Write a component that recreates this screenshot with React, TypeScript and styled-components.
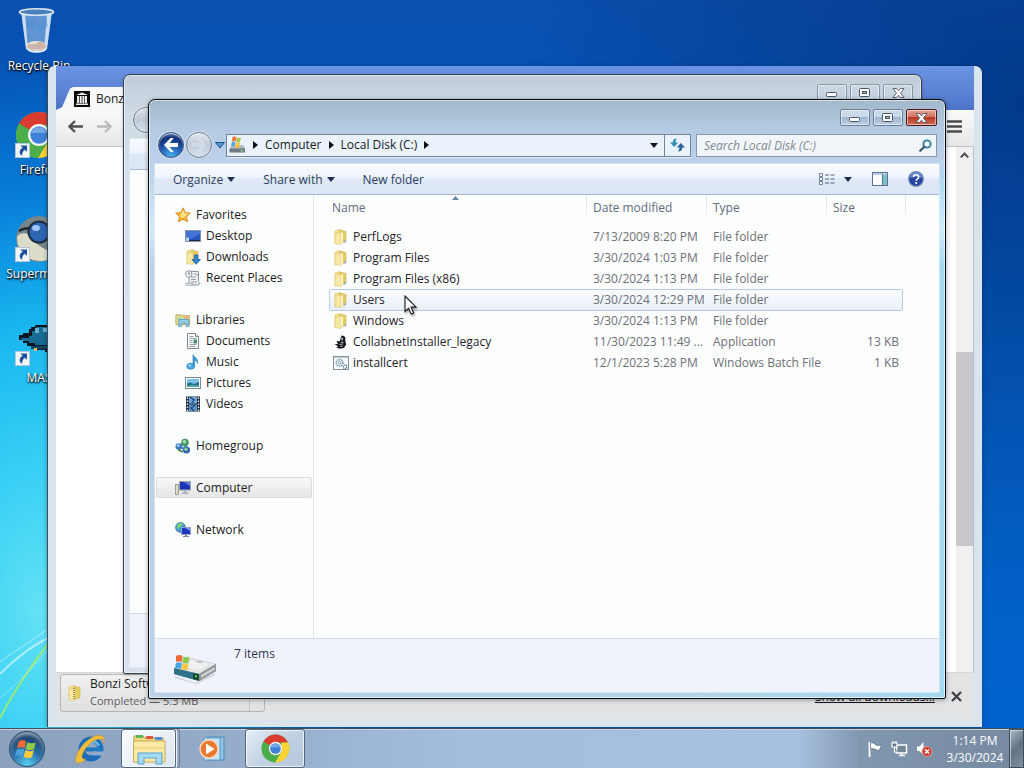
import React from "react";
import styled, { createGlobalStyle, css } from "styled-components";

const GlobalStyle = createGlobalStyle`
  *, *::before, *::after { box-sizing: border-box; }
  body { margin: 0; overflow: hidden; }
  body, button, input, table { font-family: "Open Sans", "Noto Sans", sans-serif; font-size: 12px; }
  button { border: 0; padding: 0; background: none; color: inherit; }
  svg { display: block; flex: none; }
  ul { list-style: none; margin: 0; padding: 0; }
`;

/* ---------- icons ---------- */

const Star = () => (
  <svg width="16" height="16" viewBox="0 0 16 16">
    <path d="M8 .8l2.1 4.7 5.2.6-3.8 3.5 1 5.2L8 12.2l-4.5 2.6 1-5.2L.7 6.1l5.2-.6z" fill="#fbb936" stroke="#cf8420" strokeWidth=".9" strokeLinejoin="round" />
    <path d="M8 2.800l1.300 3.400 3.600.5-2.700 2.200L8 11 5.500 9.500z" fill="#ffe88c" />
  </svg>
);
const DesktopIcon = () => (
  <svg width="16" height="16" viewBox="0 0 16 16">
    <rect x=".5" y="2.500" width="15" height="11" fill="#2554bd" stroke="#8594a8" />
    <path d="M1 3h14v3L6 11H1z" fill="#4173d6" />
    <path d="M1 12h14v1H1z" fill="#1b2c50" />
    <path d="M1 9.500h3V13H1z" fill="#b8d0ee" />
  </svg>
);
const FolderShape = () => (
  <>
    <path d="M2 2l5-1.500v12L2 15z" fill="#f3e08c" stroke="#d9c06a" strokeWidth=".6" />
    <path d="M7 1l6 1.500v10L7 14.500z" fill="#e6ca62" stroke="#d0b255" strokeWidth=".6" />
    <path d="M2 4.500l6-1.300v12.300L2 14.500z" fill="#f7e9a4" stroke="#dcc572" strokeWidth=".6" />
  </>
);
const Folder = () => (
  <svg width="16" height="16" viewBox="0 0 16 16">
    <FolderShape />
    <path d="M8 3.500h2v9l-2 2.800z" fill="#fbf3c4" />
    <path d="M11.600 10.500l1.300.7v2l-1.800.2z" fill="#88b2cc" />
  </svg>
);
const DownloadsIcon = () => (
  <svg width="16" height="16" viewBox="0 0 16 16">
    <FolderShape />
    <path d="M9.500 6h3.400v4.500H15.500L11.200 15.300 7 10.500h2.500z" fill="#3188d4" stroke="#19599d" strokeWidth=".8" />
  </svg>
);
const RecentIcon = () => (
  <svg width="16" height="16" viewBox="0 0 16 16">
    <path d="M4 1.500h9.500v10L15 13.500 13 15H5.500L4 13.500z" fill="#edf0f2" stroke="#8b949c" />
    <path d="M6 7h5M6 9.500h5M6 12h6M9 4h3v2" stroke="#97a1aa" fill="none" />
    <circle cx="3.800" cy="4" r="3.200" fill="#f7f9fa" stroke="#8b949c" />
    <path d="M3.800 2v2.200h1.700" stroke="#7b858e" fill="none" />
    <path d="M.8 13.200h7v2h-7z" fill="#dfe4e8" stroke="#9aa3ab" strokeWidth=".7" />
  </svg>
);
const LibrariesIcon = () => (
  <svg width="16" height="16" viewBox="0 0 17 16">
    <path d="M1 2.500h5l1 1h8.500V13H1z" fill="#f0df8e" stroke="#b9a455" />
    <path d="M2.500 4.500h6v3h-6z" fill="#b7dca0" />
    <path d="M9.500 4.500h5v2h-5z" fill="#e9a28c" />
    <path d="M4 7.500h10.500V15H12v-3.500H6.500V15H4z" fill="#93cfea" stroke="#4e9ac2" strokeWidth=".9" />
  </svg>
);
const DocIcon = () => (
  <svg width="16" height="16" viewBox="0 0 16 16">
    <path d="M2.500.5h8l3 3v12h-11z" fill="#fcfdfd" stroke="#7f868b" />
    <path d="M10.500.5v3h3" fill="#e4e8ea" stroke="#7f868b" />
    <path d="M4.500 3.500h4M4.500 5.500h7M4.500 7.500h3M4.500 9.500h3M4.500 11.500h7M4.500 13.500h6" stroke="#8d959b" strokeWidth=".9" />
    <path d="M8.500 6.500h3.500v4H8.500z" fill="#4c8a76" />
  </svg>
);
const MusicIcon = () => (
  <svg width="16" height="16" viewBox="0 0 16 16">
    <path d="M8 .6c.8 3 5.600 3.600 4.600 8.900-.4-2.200-1.800-3-3-3.200v6h-1.600z" fill="#3e9fdd" stroke="#1d74b6" strokeWidth=".6" />
    <ellipse cx="5.700" cy="12.200" rx="4" ry="3" fill="#46a9e4" stroke="#1d74b6" strokeWidth=".6" />
    <ellipse cx="4.700" cy="11.400" rx="1.700" ry="1" fill="#a6dbf8" />
  </svg>
);
const PictureIcon = () => (
  <svg width="16" height="16" viewBox="0 0 16 16">
    <rect x=".5" y="2.500" width="15" height="11" fill="#fff" stroke="#7d8b98" />
    <rect x="2" y="4" width="12" height="8" fill="#79bfe6" />
    <path d="M2 8.500l3-1 4 1.500 5-2V12H2z" fill="#256a80" />
    <path d="M2 10.500l6-.7 6 .7V12H2z" fill="#49a6a0" />
  </svg>
);
const VideoIcon = () => (
  <svg width="16" height="16" viewBox="0 0 16 16">
    <rect x="1" y=".5" width="14" height="15" fill="#212c38" />
    <rect x="4" y="1" width="8" height="6.500" fill="#6fa5d9" />
    <rect x="4" y="8.500" width="8" height="6.500" fill="#5d94cc" />
    <path d="M5 1l4 3-2 3M10 9l-4 3 3 3" stroke="#1e4878" strokeWidth="1.300" fill="none" />
    <path d="M2.500 1.500v14M13.500 1.500v14" stroke="#e6edf3" strokeWidth="1.400" strokeDasharray="1.500 1.500" />
  </svg>
);
const HomegroupIcon = () => (
  <svg width="16" height="16" viewBox="0 0 16 16">
    <path d="M4 8l6-3 1 7z" fill="none" stroke="#4a8fb8" strokeWidth="2.500" />
    <circle cx="3.800" cy="8.500" r="3.300" fill="#3b78c4" />
    <circle cx="10" cy="4.500" r="3.800" fill="#3f9a62" />
    <circle cx="11.500" cy="12" r="3.500" fill="#2f62b4" />
    <circle cx="9.400" cy="3.800" r="1.800" fill="#a6ddb0" />
    <circle cx="3.200" cy="7.500" r="1.500" fill="#a6cdf2" />
    <circle cx="11" cy="11.200" r="1.700" fill="#8fd093" />
    <path d="M3 11.500l5 2.500" stroke="#357f45" strokeWidth="1.800" />
  </svg>
);
const ComputerIcon = () => (
  <svg width="16" height="16" viewBox="0 0 16 16">
    <rect x=".5" y="4.500" width="3" height="10" fill="#d8dccb" stroke="#8c917e" strokeWidth=".8" />
    <rect x="4.500" y="1.500" width="11" height="8.500" fill="#1c33b8" stroke="#a1a798" />
    <path d="M9 2h6v4z" fill="#5a82ea" />
    <path d="M8.500 10.500h3v2h2V14h-7v-1.500h2z" fill="#aab2c4" />
  </svg>
);
const NetworkIcon = () => (
  <svg width="16" height="16" viewBox="0 0 16 16">
    <circle cx="5.500" cy="5.500" r="5" fill="#3f97d6" stroke="#2b6ca4" strokeWidth=".6" />
    <path d="M2 3c2-2.500 5-2.500 6-.500C7 5 4.500 4 4 7.500 2.500 7 1 5.500 2 3z" fill="#7ccf7e" />
    <rect x="6.500" y="5.500" width="9" height="7" fill="#1d36c0" stroke="#93a5c2" />
    <path d="M10 6h5v3z" fill="#6c93ef" />
    <path d="M10 13h2v1h2v1H8v-1h2z" fill="#7587a6" />
  </svg>
);
const InstallerIcon = () => (
  <svg width="16" height="16" viewBox="0 0 16 16">
    <path d="M8.500 1.500l2.500.5 1.500 1.800-.3 2.700 1 4-2.200 3.500-4.500.7-3.300-1.500 1.800-.9-3.500-2 3.500-.3L3.500 7l3.200.3z" fill="#17191d" />
    <path d="M8.500 3.300l2 .8-.8 2.400-2.200-.7z" fill="#8d97a3" />
    <path d="M8 8l2.500.4M6.500 10.500l3.500-.6M7.500 12.500l2-.3" stroke="#cfd5da" strokeWidth=".9" />
  </svg>
);
const BatchIcon = () => (
  <svg width="16" height="16" viewBox="0 0 16 16">
    <rect x=".5" y="1.500" width="15" height="13" fill="#fafcfd" stroke="#81909b" />
    <path d="M1 2h14v1.300H1z" fill="#c6d3dc" />
    <circle cx="6.500" cy="7.800" r="3.300" fill="none" stroke="#7f9fb3" strokeWidth="1.600" strokeDasharray="1.500 .6" />
    <circle cx="6.500" cy="7.800" r="1.400" fill="none" stroke="#6d93ab" strokeWidth=".8" />
    <circle cx="12" cy="11.800" r="1.800" fill="none" stroke="#53768c" strokeWidth="1.300" strokeDasharray="1.200 .5" />
  </svg>
);
const Flag4 = ({ size = 16 }: { size?: number }) => (
  <svg width={size} height={size} viewBox="0 0 20 20">
    <path d="M3 4c2.500-1.800 4.500-1.300 6.300-.2L8 9.400C6 8.300 4 8.200 1.700 9.600z" fill="#ee6b35" />
    <path d="M10.300 4.300c2.500 1.300 4.700 1.300 7 0L15.900 10c-2.200 1.200-4.500 1.200-7-.1z" fill="#8fcb49" />
    <path d="M1.400 10.700c2.300-1.300 4.300-1.200 6.300-.2l-1.400 5.600c-2-1.200-4-1.200-6.300.2z" fill="#4aa1df" />
    <path d="M8.700 10.900c2.500 1.300 4.700 1.300 7 0l-1.500 5.700c-2.200 1.200-4.500 1.200-7-.1z" fill="#fbcb3d" />
  </svg>
);
const SmallDrive = () => (
  <svg width="18" height="18" viewBox="0 0 18 18">
    <path d="M2 12l2-3h11l2 3v1H2z" fill="#b3bbc2" />
    <path d="M1.500 12.500h15.500v4H1.500z" fill="#6f7982" />
    <path d="M12.500 14h3v1.300h-3z" fill="#7fe07f" />
    <path d="M4 5.500l3.500.5-1 4.500L3 10z" fill="#58a6dd" />
    <path d="M4.500 1c1.500-.8 3-.5 4 .2L7.800 5.500c-1.300-.7-2.600-.7-3.800 0z" fill="#ee7238" />
    <path d="M9 1.500c1.300.6 2.600.6 4 0l-1 4.800c-1.200.5-2.500.4-3.700-.2z" fill="#a4c94c" />
    <path d="M8 6.500c1.300.6 2.500.7 3.800.2l-1 5c-1.300.3-2.500.2-3.800-.4z" fill="#f4c436" />
  </svg>
);
const BigDrive = () => (
  <svg width="44" height="32" viewBox="0 0 44 32">
    <path d="M2 24l20 7 20-10v2L23 32 2 26z" fill="#aab0b8" opacity=".5" />
    <path d="M1 16L18 6l25 6v7L26 29 1 22z" fill="#8a9193" />
    <path d="M1 16L18 6l25 6-17 10z" fill="#e2e5e5" />
    <path d="M18 8l18 4.200-10 6-17-4z" fill="#eff0f0" />
    <path d="M22 9.500l4-1 5 1.200-4 1.500z" fill="#bcc1c3" />
    <path d="M1 16l25 6v7L1 22z" fill="#2d718a" />
    <path d="M20 21l6 1.200v6.300l-6-1.500z" fill="#174a33" />
    <path d="M22 23l2 .5v2l-2-.5z" fill="#4fe05f" />
    <path d="M26 22l17-10v7L26 29z" fill="#8f9597" />
    <path d="M28 23l14-8v2.500L28 26z" fill="#cdd2d2" />
    <path d="M3 4c2.500-1.500 4.500-1.200 6.500 0L9 10c-2-1-4-1-6 0z" fill="#ec6a37" />
    <path d="M10.500 4.600c2 1 4 1 6 0L15.500 11c-2 .8-4 .8-6-.2z" fill="#8bc64d" />
    <path d="M2.800 11c2-1 4-1 6 0L8 17c-2-1-4-1-6 .2z" fill="#4ba4e2" />
    <path d="M9.500 11.500c2 1 4 1 6 0l-1 6c-2 .8-4 .8-6-.2z" fill="#f7c83c" />
  </svg>
);

const Triangle = ({ color = "#1e2f52" }: { color?: string }) => (
  <svg width="8" height="5" viewBox="0 0 8 5">
    <path d="M0 0h8L4 5z" fill={color} />
  </svg>
);
const Chevron = () => (
  <svg width="5" height="8" viewBox="0 0 5 8">
    <path d="M0 0v8l5-4z" fill="#0c0f14" />
  </svg>
);
const ChromeLogo = ({ size }: { size: number }) => (
  <svg width={size} height={size} viewBox="0 0 48 48">
    <circle cx="24" cy="24" r="23" fill="#4cae4a" />
    <path d="M24 24L4.100 12.500A23 23 0 0 1 43.900 12.500L44 14H24z" fill="#dc3b30" />
    <path d="M43.900 12.500A23 23 0 0 1 23 47L33.500 29 34 14h10z" fill="#fbd334" />
    <path d="M4.100 12.500L14.700 29.500 24 34l9.500-4.500L23 47A23 23 0 0 1 4.100 12.500z" fill="#4cae4a" />
    <circle cx="24" cy="24" r="11" fill="#f4f6f7" />
    <circle cx="24" cy="24" r="8.700" fill="#3f80d8" />
    <path d="M16 22a8.500 8.500 0 0 1 16 0z" fill="#76a8e8" />
  </svg>
);
const ShortcutArrow = () => (
  <svg width="15" height="15" viewBox="0 0 15 15">
    <rect x=".5" y=".5" width="14" height="14" fill="#f3f7fc" stroke="#b5c5da" />
    <path d="M5.500 2.500H12v6.300L9.800 6.700C7.600 8.400 7 10 7.300 12.800 4 11 3.400 7.300 7.700 4.700z" fill="#1c4f9f" />
  </svg>
);
const RecycleBin = () => (
  <svg width="48" height="48" viewBox="0 0 48 48">
    <path d="M6 4l5 38c3 4.500 17 4.500 21 0l5-38z" fill="#a9cdf0" opacity=".55" />
    <path d="M6 4l5 38 2 1.500L10 6z" fill="#eef6fd" opacity=".75" />
    <path d="M37 4l-5 38-3 2 3-37z" fill="#e4f0fb" opacity=".8" />
    <path d="M12 12l6-2 4 6-5 6-6-3zM22 20l9-9 2 8-7 5z" fill="#4d8fd6" opacity=".5" />
    <ellipse cx="21.500" cy="39" rx="10.500" ry="5" fill="#eadfd6" />
    <path d="M12 39c3-4 7 0 10-3s7 0 9 2l-1 3c-4 2-13 2-17 0z" fill="#c3a898" opacity=".75" />
    <path d="M13 42c4 3 13 3 17.500 0v1.500c-4 3-14 3-17.500 0z" fill="#f6f9fc" />
    <ellipse cx="21.500" cy="5" rx="17" ry="3.200" fill="#4a80bd" stroke="#d9e6f2" strokeWidth="1.600" />
  </svg>
);
const SupermiumLogo = () => (
  <svg width="48" height="48" viewBox="0 0 48 48">
    <circle cx="24" cy="24" r="23" fill="#77868a" />
    <path d="M2 22c4-7 15-3 18 4 4 8 18 9 18 16A23 23 0 0 1 2 22z" fill="#dcdccb" />
    <path d="M4 16c6-4 12-3 18-3h22" stroke="#1d2a35" strokeWidth="2.500" fill="none" />
    <circle cx="24" cy="17" r="11.500" fill="#1d2a3c" />
    <circle cx="24" cy="17" r="9.500" fill="#2d65b4" />
    <ellipse cx="21" cy="13" rx="4" ry="3" fill="#9cc7f2" />
  </svg>
);
const SaucerIcon = () => (
  <svg width="48" height="48" viewBox="0 0 48 48" shapeRendering="crispEdges">
    <path d="M14 10h2V8h4V6h22v5h6v24h-8v-2H30v-2h-8v-2h-6v-2h-4v-3H8v-3H4v-5h4v-2h6z" fill="#0a1824" />
    <path d="M6 19h8v-2h3v-5h4V8h18v9h9v9H20v-2h-6v-2H8z" fill="#176a92" />
    <path d="M20 9h4v5h-4zM28 9h8v4h-8z" fill="#64b3d4" />
    <path d="M16 27h26v3H16z" fill="#0f4560" />
    <path d="M19 29h3v3h-3z" fill="#e8bd62" />
  </svg>
);

/* ---------- desktop ---------- */

const Screen = styled.div`
  display: flex;
  flex-direction: column;
  height: 100vh;
  overflow: hidden;
`;
const Desktop = styled.main`
  position: relative;
  flex: 1;
  min-height: 0;
  overflow: hidden;
  background:
    radial-gradient(ellipse 320px 560px at 4% 84%, #63e2f4 0%, #3ad0f5 25%, #1ab8f0 50%, rgba(8, 140, 228, 0.7) 75%, rgba(4, 104, 204, 0) 100%),
    radial-gradient(ellipse 500px 500px at 100% 15%, rgba(0, 40, 110, 0.6), rgba(0, 50, 130, 0)),
    linear-gradient(180deg, #0a50ae 0%, #0552b4 12%, #0460c4 50%, #0062cc 100%);
`;
const Streaks = styled.svg`
  position: absolute;
  left: 0;
  bottom: 0;
`;
const IconColumn = styled.ul`
  position: absolute;
  top: 7px;
  left: 0;
  width: 78px;
`;
const Shortcut = styled.li`
  position: relative;
  display: flex;
  flex-direction: column;
  align-items: center;
  gap: 3px;
  height: 104px;
  color: #fff;
  line-height: 16px;
  white-space: nowrap;
  text-shadow: 0 1px 2px #000, 1px 1px 2px #000;
`;
const Overlay = styled.span`
  position: absolute;
  left: 15px;
  top: 32px;
`;

/* ---------- windows ---------- */

const WindowFrame = styled.section<{ $active?: boolean }>`
  position: absolute;
  inset: ${(p) => (p.$active ? "99px 78px 29px 148px" : "74px 102px 54px 123px")};
  display: flex;
  flex-direction: column;
  padding: 0 6px 6px;
  border: 1px solid ${(p) => (p.$active ? "#05090e" : "#34434f")};
  border-radius: 7px 7px 2px 2px;
  ${(p) =>
    p.$active
      ? css`
          background:
            linear-gradient(180deg, rgba(0, 0, 0, 0) 70px, rgba(226, 242, 252, 0.7) 130px, rgba(0, 0, 0, 0) 165px),
            linear-gradient(180deg, #a2b8ca 0, #b4cae2 28px, #bdd1ec 64px, rgba(189, 209, 236, 0) 90px),
            linear-gradient(90deg, #b9d2e5, #b3d5e8 70%, #a5d9f0);
          box-shadow: inset 0 0 0 1px rgba(255, 255, 255, 0.6), 0 1px 5px rgba(0, 0, 0, 0.35);
        `
      : css`
          background: linear-gradient(180deg, #c0cdd9 0, #cfdae3 40px, #d8e1e9 120px, #dbe1eb 100%);
          box-shadow: inset 0 0 0 1px rgba(255, 255, 255, 0.5), 0 1px 3px rgba(0, 0, 0, 0.25);
        `}
`;
const TitleBar = styled.header`
  display: flex;
  justify-content: flex-end;
  align-items: flex-start;
  gap: 3px;
  height: 28px;
  padding: 9px 2px 0 0;
`;
const CaptionButton = styled.button<{ $kind: "plain" | "idle" | "close" }>`
  display: grid;
  place-items: center;
  width: ${(p) => (p.$kind === "close" ? "31px" : "30px")};
  height: 17px;
  border: 1px solid #6c7e94;
  border-radius: 2px;
  box-shadow: inset 0 0 0 1px rgba(255, 255, 255, 0.5);
  background: linear-gradient(#cbdaea 0 46%, #a0b6cf 50%, #bcd1e7);
  ${(p) =>
    p.$kind === "close" &&
    css`
      border-color: #4c1b1c;
      background: linear-gradient(#e6a393 0, #d27563 46%, #b93722 50%, #d1705a);
    `}
  ${(p) =>
    p.$kind === "idle" &&
    css`
      border-color: #8896a4;
      background: linear-gradient(#ccd7e1, #c6d2de);
    `}
`;
const CaptionButtons = ({ active }: { active?: boolean }) => (
  <>
    <CaptionButton $kind={active ? "plain" : "idle"} aria-label="Minimize">
      <svg width="12" height="9" viewBox="0 0 12 9">
        <rect x=".5" y="4.500" width="10" height="4" rx="1" fill="#fff" stroke="#4a5666" />
      </svg>
    </CaptionButton>
    <CaptionButton $kind={active ? "plain" : "idle"} aria-label="Maximize">
      <svg width="12" height="9" viewBox="0 0 12 9">
        <rect x=".5" y=".5" width="10" height="8" rx="1" fill="#fff" stroke="#4a5666" />
        <rect x="3.500" y="3.500" width="4" height="2" fill="#a9bacd" stroke="#4a5666" />
      </svg>
    </CaptionButton>
    <CaptionButton $kind={active ? "close" : "idle"} aria-label="Close">
      <svg width="13" height="10" viewBox="0 0 13 10">
        <path d="M1 .5h3.400l2.100 2.300L8.600.5H12L8.500 5l3.500 4.500H8.600L6.500 7.200 4.400 9.500H1L4.500 5z" fill="#fff" stroke="#4a5360" strokeWidth=".9" />
      </svg>
    </CaptionButton>
  </>
);

const NavBar = styled.div`
  display: flex;
  align-items: center;
  height: 36px;
  padding: 0 2px 2px 3px;
`;
const RoundButton = styled.button<{ $lit?: boolean }>`
  display: grid;
  place-items: center;
  flex: none;
  width: 26px;
  height: 26px;
  margin-right: 2px;
  border-radius: 50%;
  border: 1px solid ${(p) => (p.$lit ? "#3a5580" : "#74818f")};
  background: ${(p) =>
    p.$lit
      ? "radial-gradient(circle at 50% 100%, #49b8f2 0, #1d4fa8 50%, #123275 72%, #8ba8d6 100%)"
      : "linear-gradient(#dde4ec, #c0cbd8 50%, #d8e3ec)"};
  box-shadow: inset 0 1px 1px rgba(255, 255, 255, 0.8), 0 0 1px 1px rgba(255, 255, 255, 0.35);
`;
const HistoryButton = styled.button`
  width: 12px;
  display: grid;
  place-items: center;
`;
const AddressBar = styled.div`
  display: flex;
  align-items: center;
  flex: 1;
  min-width: 0;
  height: 23px;
  margin: 0 5px 0 0;
  border: 1px solid #6f8499;
  background: #eaf2fb;
  box-shadow: 0 1px 0 rgba(255, 255, 255, 0.6);
`;
const Crumbs = styled.nav`
  display: flex;
  align-items: center;
  gap: 7px;
  flex: 1;
  padding-left: 1px;
  line-height: 16px;
  a {
    color: #15191f;
    text-decoration: none;
    white-space: nowrap;
  }
`;
const AddressTool = styled.button<{ $divided?: boolean }>`
  display: grid;
  place-items: center;
  height: 21px;
  width: ${(p) => (p.$divided ? "26px" : "20px")};
  border-left: ${(p) => (p.$divided ? "1px solid #6f8499" : "0")};
`;
const SearchBox = styled.label`
  display: flex;
  align-items: center;
  width: 241px;
  height: 23px;
  padding: 0 4px 0 7px;
  border: 1px solid #8798ab;
  background: #f1f6fb;
  input {
    flex: 1;
    min-width: 0;
    padding: 0;
    border: 0;
    outline: 0;
    background: transparent;
    font-style: italic;
  }
  input::placeholder {
    color: #82888f;
  }
`;
const Body = styled.div`
  display: flex;
  flex-direction: column;
  flex: 1;
  min-height: 0;
  background: #fdfefe;
  box-shadow: 0 0 0 1px rgba(230, 243, 252, 0.5);
`;
const Toolbar = styled.div`
  display: flex;
  align-items: center;
  flex: none;
  height: 31px;
  padding: 0 15px 0 18px;
  border-bottom: 1px solid #a9b6cb;
  background: linear-gradient(#fafcff 0, #eef4fd 45%, #dfe9f7 50%, #dbe6f5 100%);
  color: #2b3d5e;
`;
const ToolButton = styled.button`
  display: flex;
  align-items: center;
  gap: 4px;
  height: 24px;
  margin-right: 28px;
  white-space: nowrap;
`;
const ToolIcons = styled.div`
  display: flex;
  align-items: center;
  margin-left: auto;
  gap: 20px;
`;
const ViewButton = styled.button`
  display: flex;
  align-items: center;
  gap: 9px;
`;
const Panes = styled.div`
  display: flex;
  flex: 1;
  min-height: 0;
`;
const SideBar = styled.nav`
  flex: none;
  width: 159px;
  padding: 9px 1px 0;
  border-right: 1px solid #e2e6ef;
`;
const SideGroup = styled.ul`
  margin-bottom: 21px;
`;
const SideItem = styled.li<{ $child?: boolean; $current?: boolean }>`
  display: flex;
  align-items: center;
  gap: 5px;
  height: 21px;
  padding-left: ${(p) => (p.$child ? "28px" : "18px")};
  border: 1px solid ${(p) => (p.$current ? "#dcdcde" : "transparent")};
  border-radius: 2px;
  background: ${(p) => (p.$current ? "linear-gradient(#f8f8f8, #e6e6e7)" : "none")};
  a {
    color: #1b1b22;
    text-decoration: none;
    white-space: nowrap;
  }
`;
const FilesPane = styled.div`
  flex: 1;
  min-width: 0;
  padding-left: 15px;
`;
const FileTable = styled.table`
  width: 577px;
  table-layout: fixed;
  border-collapse: collapse;
  isolation: isolate;
  color: #6d7076;
`;
const HeadCell = styled.th<{ $width: number; $first?: boolean }>`
  position: relative;
  width: ${(p) => p.$width}px;
  height: 31px;
  padding: ${(p) => (p.$first ? "0 0 6px 3px" : "0 0 6px 6px")};
  text-align: left;
  font-weight: 400;
  color: #5f6b7e;
  &::after {
    content: "";
    position: absolute;
    right: 0;
    top: 0;
    width: 1px;
    height: 19px;
    background: linear-gradient(#dde4ee, #e6ebf2);
  }
`;
const SortMark = styled.svg`
  position: absolute;
  left: 123px;
  top: 1px;
`;
const Row = styled.tr<{ $hot?: boolean }>`
  position: relative;
  height: 21px;
  ${(p) =>
    p.$hot &&
    css`
      &::after {
        content: "";
        position: absolute;
        z-index: -1;
        inset: 0 3px -1px 0;
        border: 1px solid #b6cbe6;
        border-radius: 2px;
        background: linear-gradient(#fafcfe, #e9f0fa);
      }
    `}
`;
const Cell = styled.td<{ $right?: boolean }>`
  padding: 0 7px 0 6px;
  text-align: ${(p) => (p.$right ? "right" : "left")};
  line-height: 16px;
  white-space: nowrap;
`;
const NameCell = styled(Cell)`
  padding: 0 4px;
  color: #24222a;
`;
const NameWrap = styled.span`
  display: flex;
  align-items: center;
  gap: 4px;
`;
const DetailsPane = styled.footer`
  display: flex;
  align-items: flex-start;
  flex: none;
  gap: 17px;
  height: 54px;
  padding: 6px 0 0 18px;
  border-top: 1px solid #d5dbe6;
  background: #f0f3fc;
  color: #2f3450;
`;
const DriveWrap = styled.span`
  padding-top: 7px;
`;

/* ---------- browser window ---------- */

const BrowserFrame = styled.section`
  position: absolute;
  inset: 66px 42px 1px 47px;
  display: flex;
  flex-direction: column;
  padding: 0 8px 8px;
  border: solid #3b4c5d;
  border-width: 0 0 0 1px;
  border-radius: 7px 7px 0 0;
  background: #dae4ec;
  box-shadow: 0 1px 4px rgba(0, 0, 0, 0.35);
`;
const TabStrip = styled.div`
  display: flex;
  align-items: flex-end;
  flex: none;
  height: 44px;
  background: linear-gradient(#6a93e3, #5b82d4 60%, #4c73c8);
`;
const Tab = styled.button`
  display: flex;
  align-items: center;
  gap: 6px;
  width: 180px;
  height: 23px;
  padding-left: 18px;
  background: #f7f8f9;
  clip-path: polygon(0 100%, 6px 88%, 14px 8%, 17px 0, 170px 0, 180px 100%);
  color: #222;
`;
const BrowserBar = styled.div`
  display: flex;
  align-items: center;
  flex: none;
  gap: 14px;
  height: 37px;
  padding: 0 12px 4px;
  border-bottom: 1px solid #c3c5c8;
  background: linear-gradient(#f8f9f9, #e7e8e9);
`;
const MenuButton = styled.button`
  margin-left: auto;
`;
const PageArea = styled.div`
  display: flex;
  justify-content: flex-end;
  flex: 1;
  min-height: 0;
  border-right: 1px solid #b9c2ca;
  background: #fff;
`;
const ScrollTrack = styled.div`
  display: flex;
  flex-direction: column;
  align-items: center;
  justify-content: space-between;
  width: 17px;
  padding: 5px 0 126px;
  background: #f0f0f3;
`;
const ScrollThumb = styled.div`
  width: 17px;
  height: 194px;
  background: #c7c8cb;
`;
const DownloadShelf = styled.footer`
  display: flex;
  align-items: center;
  flex: none;
  height: 47px;
  padding: 0 12px 0 4px;
  background: #e2e3e4;
  border-top: 1px solid #d4d6d8;
`;
const DownloadItem = styled.div`
  display: flex;
  align-items: center;
  width: 205px;
  height: 38px;
  margin-bottom: 7px;
  padding-left: 6px;
  border: 1px solid #b4b6b9;
  border-radius: 3px;
  background: linear-gradient(#f0f0f0, #e0e0e1);
  color: #1a1a1a;
  line-height: 17px;
`;
const DownloadText = styled.div`
  flex: 1;
  padding: 0 0 2px 7px;
  small {
    display: block;
    font-size: 11px;
    color: #5c5c5c;
  }
`;
const DownloadMenu = styled.button`
  align-self: stretch;
  width: 15px;
  border-left: 1px solid #c2c3c5;
`;
const ShelfLink = styled.a`
  margin: 0 16px 0 auto;
  color: #16181d;
`;

/* ---------- taskbar ---------- */

const Taskbar = styled.footer`
  display: flex;
  align-items: center;
  flex: none;
  height: 40px;
  border-top: 1px solid #42505f;
  box-shadow: inset 0 1px 0 #c3d1e0;
  background: linear-gradient(90deg, #8ba1bd 0, #93abc9 20%, #a3bddc 45%, #a6c0df 78%, #8197b0 84%, #75899f 100%);
`;
const StartButton = styled.button`
  display: grid;
  place-items: center;
  width: 36px;
  height: 36px;
  margin: 0 22px 0 9px;
  border-radius: 50%;
  border: 1px solid #2c4c6d;
  background: radial-gradient(circle at 50% 95%, #57d0f0 0, #2a73ab 40%, #1a3d69 75%, #5e7f9f 100%);
  box-shadow: inset 0 3px 4px rgba(255, 255, 255, 0.45);
`;
const TaskButton = styled.button<{ $open?: boolean; $stacked?: boolean }>`
  position: relative;
  display: grid;
  place-items: center;
  width: ${(p) => (p.$open ? (p.$stacked ? "55px" : "60px") : "46px")};
  height: 39px;
  margin: ${(p) => (p.$open ? (p.$stacked ? "0 13px 0 8px" : "0 0 0 10px") : "0")};
  ${(p) =>
    p.$open &&
    css`
      border: 1px solid #55677c;
      border-radius: 3px;
      background: linear-gradient(135deg, #e6edf5, #c2d1e3 50%, #b6c8dd);
      box-shadow: inset 0 0 0 1px rgba(255, 255, 255, 0.75);
    `}
  ${(p) =>
    p.$stacked &&
    css`
      background: linear-gradient(135deg, #f8fbfd, #dbe5f0);
      &::after {
        content: "";
        position: absolute;
        top: -1px;
        bottom: -1px;
        right: -5px;
        width: 4px;
        border: 1px solid #6b7d93;
        border-left-color: #eef4fa;
        border-radius: 0 3px 3px 0;
      }
    `}
`;
const Tray = styled.div`
  display: flex;
  align-items: center;
  gap: 8px;
  margin-left: auto;
`;
const Clock = styled.time`
  width: 68px;
  color: #fff;
  text-align: center;
  line-height: 17px;
`;
const ShowDesktop = styled.button`
  width: 15px;
  height: 39px;
  margin-left: -8px;
  border: 1px solid #3e4c5b;
  box-shadow: inset 1px 1px 0 rgba(255, 255, 255, 0.5);
  background: linear-gradient(135deg, #a9b7c5, #607284 50%, #8092a5);
`;
const Pointer = styled.svg`
  position: absolute;
  left: 404px;
  top: 295px;
  filter: drop-shadow(1px 2px 1px rgba(0, 0, 0, 0.35));
`;

/* ---------- data ---------- */

type Link = { name: string; icon: React.ReactNode };
const sideGroups: (Link & { children: Link[]; current?: boolean })[] = [
  {
    name: "Favorites",
    icon: <Star />,
    children: [
      { name: "Desktop", icon: <DesktopIcon /> },
      { name: "Downloads", icon: <DownloadsIcon /> },
      { name: "Recent Places", icon: <RecentIcon /> },
    ],
  },
  {
    name: "Libraries",
    icon: <LibrariesIcon />,
    children: [
      { name: "Documents", icon: <DocIcon /> },
      { name: "Music", icon: <MusicIcon /> },
      { name: "Pictures", icon: <PictureIcon /> },
      { name: "Videos", icon: <VideoIcon /> },
    ],
  },
  { name: "Homegroup", icon: <HomegroupIcon />, children: [] },
  { name: "Computer", icon: <ComputerIcon />, children: [], current: true },
  { name: "Network", icon: <NetworkIcon />, children: [] },
];

const files = [
  { name: "PerfLogs", date: "7/13/2009 8:20 PM", type: "File folder", size: "", icon: <Folder /> },
  { name: "Program Files", date: "3/30/2024 1:03 PM", type: "File folder", size: "", icon: <Folder /> },
  { name: "Program Files (x86)", date: "3/30/2024 1:13 PM", type: "File folder", size: "", icon: <Folder /> },
  { name: "Users", date: "3/30/2024 12:29 PM", type: "File folder", size: "", icon: <Folder />, hot: true },
  { name: "Windows", date: "3/30/2024 1:13 PM", type: "File folder", size: "", icon: <Folder /> },
  { name: "CollabnetInstaller_legacy", date: "11/30/2023 11:49 ...", type: "Application", size: "13 KB", icon: <InstallerIcon /> },
  { name: "installcert", date: "12/1/2023 5:28 PM", type: "Windows Batch File", size: "1 KB", icon: <BatchIcon /> },
];

const shortcuts = [
  { name: "Recycle Bin", icon: <RecycleBin />, linked: false },
  { name: "Firefox", icon: <ChromeLogo size={48} />, linked: true },
  { name: "Supermium", icon: <SupermiumLogo />, linked: true },
  { name: "MAS", icon: <SaucerIcon />, linked: true },
];

/* ---------- parts ---------- */

const Browser = () => (
  <BrowserFrame aria-label="Browser">
    <TabStrip>
      <Tab>
        <svg width="16" height="16" viewBox="0 0 16 16">
          <path d="M0 0h16v16H0z" fill="#08090a" />
          <path d="M8 1.500l6 2.500H2zM2 12.500h12V14H2zM3 5h2v7H3zM5.700 5h2v7h-2zM8.400 5h2v7h-2zM11 5h2v7h-2z" fill="#e9ebec" />
        </svg>
        Bonzi
      </Tab>
    </TabStrip>
    <BrowserBar>
      <button aria-label="Back">
        <svg width="15" height="13" viewBox="0 0 15 13">
          <path d="M7 1L1.500 6.500 7 12M2 6.500h13" fill="none" stroke="#4f5052" strokeWidth="2.300" />
        </svg>
      </button>
      <button aria-label="Forward">
        <svg width="15" height="13" viewBox="0 0 15 13">
          <path d="M8 1l5.500 5.500L8 12M13 6.500H0" fill="none" stroke="#b9babc" strokeWidth="2.300" />
        </svg>
      </button>
      <MenuButton aria-label="Menu">
        <svg width="15" height="13" viewBox="0 0 15 13">
          <path d="M0 1.500h15M0 6.500h15M0 11.500h15" stroke="#4b4c4e" strokeWidth="2.600" />
        </svg>
      </MenuButton>
    </BrowserBar>
    <PageArea>
      <ScrollTrack>
        <svg width="9" height="6" viewBox="0 0 9 6">
          <path d="M.8 5.500L4.500 1.500l3.700 4" fill="none" stroke="#4e5053" strokeWidth="2" />
        </svg>
        <ScrollThumb />
      </ScrollTrack>
    </PageArea>
    <DownloadShelf>
      <DownloadItem>
        <svg width="16" height="16" viewBox="0 0 16 16">
          <FolderShape />
          <path d="M7 3v11" stroke="#857441" strokeDasharray="1 1" strokeWidth="1.500" />
        </svg>
        <DownloadText>
          Bonzi Software
          <small>Completed — 5.3 MB</small>
        </DownloadText>
        <DownloadMenu aria-label="Download options" />
      </DownloadItem>
      <ShelfLink href="#downloads">Show all downloads...</ShelfLink>
      <button aria-label="Close shelf">
        <svg width="11" height="11" viewBox="0 0 11 11">
          <path d="M1 1l9 9M10 1l-9 9" stroke="#404144" strokeWidth="2.400" />
        </svg>
      </button>
    </DownloadShelf>
  </BrowserFrame>
);

const BackWindow = () => (
  <WindowFrame aria-label="Folder window">
    <TitleBar>
      <CaptionButtons />
    </TitleBar>
    <NavBar>
      <RoundButton aria-label="Back" />
    </NavBar>
    <Body>
      <Toolbar />
      <Panes>
        <SideBar />
      </Panes>
      <DetailsPane />
    </Body>
  </WindowFrame>
);

const Explorer = () => (
  <WindowFrame $active aria-label="Local Disk (C:)">
    <TitleBar>
      <CaptionButtons active />
    </TitleBar>
    <NavBar>
      <RoundButton $lit aria-label="Back">
        <svg width="16" height="14" viewBox="0 0 16 14">
          <path d="M7.500 0h3.300L6.600 5H15v4H6.600l4.200 5H7.500L1 7z" fill="#fff" />
        </svg>
      </RoundButton>
      <RoundButton aria-label="Forward">
        <svg width="16" height="14" viewBox="0 0 16 14">
          <path d="M8.500 0H5.200l4.200 5H1v4h8.400l-4.200 5h3.300L15 7z" fill="#dae4ec" opacity=".6" />
        </svg>
      </RoundButton>
      <HistoryButton aria-label="Recent pages">
        <svg width="10" height="7" viewBox="0 0 10 7">
          <path d="M.5.500h9L5 6z" fill="#4f9bd0" stroke="#1f4e86" />
        </svg>
      </HistoryButton>
      <AddressBar>
        <Crumbs aria-label="Path">
          <SmallDrive />
          <Chevron />
          <a href="#computer">Computer</a>
          <Chevron />
          <a href="#c">Local Disk (C:)</a>
          <Chevron />
        </Crumbs>
        <AddressTool aria-label="Previous locations">
          <Triangle color="#0f1522" />
        </AddressTool>
        <AddressTool $divided aria-label="Refresh">
          <svg width="15" height="14" viewBox="0 0 15 14">
            <path d="M7 .5C4 .5 2.800 2 2.800 4.500H0L4.200 9l4-4.500H5.500c0-1.500.3-2.500 1.500-4z" fill="#2f8fb4" />
            <path d="M8 13.500c3 0 4.200-1.500 4.200-4H15L10.800 5l-4 4.500h2.700c0 1.500-.3 2.500-1.500 4z" fill="#23649c" />
          </svg>
        </AddressTool>
      </AddressBar>
      <SearchBox>
        <input type="text" aria-label="Search" placeholder="Search Local Disk (C:)" />
        <svg width="13" height="13" viewBox="0 0 13 13">
          <circle cx="8" cy="5" r="3.700" fill="#eef6fb" stroke="#2f7c9b" strokeWidth="1.800" />
          <path d="M5.300 7.700L1.200 11.800" stroke="#35556f" strokeWidth="2.200" strokeLinecap="round" />
        </svg>
      </SearchBox>
    </NavBar>
    <Body>
      <Toolbar>
        <ToolButton>
          Organize <Triangle />
        </ToolButton>
        <ToolButton>
          Share with <Triangle />
        </ToolButton>
        <ToolButton>New folder</ToolButton>
        <ToolIcons>
          <ViewButton aria-label="Change view">
            <svg width="16" height="12" viewBox="0 0 16 12">
              <path d="M.5.500h3v3h-3zM.5 4.500h3v3h-3zM.5 8.500h3v3h-3z" fill="#fff" stroke="#6f8096" />
              <path d="M6 2h4M11.500 2h4M6 6h4M11.500 6h4M6 10h4M11.500 10h4" stroke="#51637b" />
            </svg>
            <Triangle />
          </ViewButton>
          <button aria-label="Preview pane">
            <svg width="16" height="14" viewBox="0 0 16 14">
              <rect x=".5" y=".5" width="15" height="13" fill="#fdfefe" stroke="#5d7390" />
              <path d="M1 1h14v2H1z" fill="#b7cbe2" />
              <path d="M10.500 3h4.500v10h-4.500z" fill="#7cc3c4" />
              <path d="M10.500 2v12" stroke="#5d7390" />
            </svg>
          </button>
          <button aria-label="Help">
            <svg width="16" height="16" viewBox="0 0 16 16">
              <circle cx="8" cy="8" r="7.400" fill="#2546a0" stroke="#8294b6" strokeWidth="1.200" />
              <path d="M2 7a6 6 0 0 1 12 0c-4-2-8-2-12 0z" fill="#6688d2" />
              <path d="M5.500 6.200c0-3.200 5.200-3.200 5.200-.2 0 2-2.500 1.800-2.500 3.800" fill="none" stroke="#fff" strokeWidth="1.700" />
              <circle cx="8.200" cy="12" r="1.100" fill="#fff" />
            </svg>
          </button>
        </ToolIcons>
      </Toolbar>
      <Panes>
        <SideBar aria-label="Places">
          {sideGroups.map((g) => (
            <SideGroup key={g.name}>
              <SideItem $current={g.current}>
                {g.icon}
                <a href="#place">{g.name}</a>
              </SideItem>
              {g.children.map((c) => (
                <SideItem key={c.name} $child>
                  {c.icon}
                  <a href="#place">{c.name}</a>
                </SideItem>
              ))}
            </SideGroup>
          ))}
        </SideBar>
        <FilesPane>
          <FileTable>
            <thead>
              <tr>
                <HeadCell $width={258} $first>
                  Name
                  <SortMark width="7" height="4" viewBox="0 0 7 4">
                    <path d="M0 4h7L3.500 0z" fill="#6a86a6" />
                  </SortMark>
                </HeadCell>
                <HeadCell $width={120}>Date modified</HeadCell>
                <HeadCell $width={120}>Type</HeadCell>
                <HeadCell $width={79}>Size</HeadCell>
              </tr>
            </thead>
            <tbody>
              {files.map((f) => (
                <Row key={f.name} $hot={f.hot}>
                  <NameCell>
                    <NameWrap>
                      {f.icon}
                      {f.name}
                    </NameWrap>
                  </NameCell>
                  <Cell>{f.date}</Cell>
                  <Cell>{f.type}</Cell>
                  <Cell $right>{f.size}</Cell>
                </Row>
              ))}
            </tbody>
          </FileTable>
        </FilesPane>
      </Panes>
      <DetailsPane>
        <DriveWrap>
          <BigDrive />
        </DriveWrap>
        7 items
      </DetailsPane>
    </Body>
  </WindowFrame>
);

const TaskbarArea = () => (
  <Taskbar>
    <StartButton aria-label="Start">
      <Flag4 size={24} />
    </StartButton>
    <TaskButton aria-label="Internet Explorer">
      <svg width="32" height="32" viewBox="0 0 32 32">
        <circle cx="17" cy="16" r="9.500" fill="none" stroke="#1c6cb8" strokeWidth="6" />
        <path d="M9 16a8.500 8.500 0 0 1 16-3" fill="none" stroke="#61b9ec" strokeWidth="2.500" />
        <path d="M9 14.500h20v4H9z" fill="#1f78c2" />
        <path d="M19 18.500h11v4H19z" fill="#95aac7" />
        <path d="M28 3c-7-3-19 6-24 16-3 6-3 11 0 11 3 0 6-2 8-4-4 1-5-2-3-6C12 13 20 5 28 6c2 0 2 2 1 5 2-3 2-7-1-8z" fill="#f2bd3b" stroke="#c58d22" strokeWidth=".5" />
      </svg>
    </TaskButton>
    <TaskButton $open $stacked aria-label="Windows Explorer">
      <svg width="34" height="32" viewBox="0 0 34 32">
        <path d="M2 3h9l2 2h18v23H2z" fill="#f1db86" stroke="#bb9c45" />
        <path d="M4 2h7v3H4z" fill="#5cb45b" />
        <path d="M14 3h7v3h-7z" fill="#e05543" />
        <path d="M23 4h7v3h-7z" fill="#5190d6" />
        <path d="M1.500 8H33v21H1.500z" fill="#faeaa6" stroke="#c7a952" />
        <path d="M2 15h30" stroke="#e5cb75" />
        <path d="M6 20h24v11h-6v-6H12v6H6z" fill="#a4d9f2" stroke="#58a5cd" />
      </svg>
    </TaskButton>
    <TaskButton aria-label="Media Player">
      <svg width="28" height="26" viewBox="0 0 28 26">
        <path d="M9 1h17v23H9z" fill="#8ec4e6" stroke="#4e8ebb" />
        <path d="M6 2h16v22H6z" fill="#c9e4f5" stroke="#5d9cc8" />
        <circle cx="11" cy="13" r="9" fill="#e9772d" stroke="#f6d6bd" strokeWidth="1.500" />
        <path d="M8 7.500v11l8.500-5.500z" fill="#fff" />
      </svg>
    </TaskButton>
    <TaskButton $open aria-label="Browser">
      <ChromeLogo size={29} />
    </TaskButton>
    <Tray>
      <svg width="16" height="16" viewBox="0 0 16 16">
        <path d="M2.500 1v15" stroke="#fff" strokeWidth="1.800" />
        <path d="M3.500 2c2-1 3.500.8 5 .8V4c2 .5 3.500.5 6 0l-2 5c-2 .5-4 0-4.500-1-1.500 0-2.500-.5-4.500 0z" fill="#fff" stroke="#45566a" strokeWidth=".6" />
      </svg>
      <svg width="17" height="16" viewBox="0 0 17 16">
        <path d="M5.500 4h10v8h-10z" fill="#71859b" stroke="#fff" strokeWidth="1.500" />
        <path d="M8 14.500h6M10.500 12v2" stroke="#fff" strokeWidth="1.600" />
        <path d="M1 2h5v4H1zM3.500 6v5h3M2 0v2M5 0v2" fill="#61758c" stroke="#fff" strokeWidth="1.200" />
      </svg>
      <svg width="17" height="16" viewBox="0 0 17 16">
        <path d="M1 5.500h2.500l4-4.500v13l-4-4H1z" fill="#fff" />
        <path d="M9.500 5.500c1 1.500 1 3 0 4.500" stroke="#fff" fill="none" />
        <circle cx="11" cy="10.500" r="5" fill="#cf3b36" stroke="#f1aaa7" strokeWidth=".7" />
        <path d="M9 8.500l4 4M13 8.500l-4 4" stroke="#fff" strokeWidth="1.500" />
      </svg>
      <Clock>
        1:14 PM
        <br />
        3/30/2024
      </Clock>
      <ShowDesktop aria-label="Show desktop" />
    </Tray>
  </Taskbar>
);

export default function App() {
  return (
    <Screen>
      <GlobalStyle />
      <Desktop>
        <Streaks width="60" height="150" viewBox="0 0 60 150" fill="none">
          <path d="M0 96C18 78 34 66 60 54" stroke="#fff" strokeWidth="2" opacity=".55" />
          <path d="M0 84C16 72 34 62 60 42" stroke="#d9fbff" opacity=".6" />
          <path d="M0 140C14 112 32 86 60 50" stroke="#a6f060" strokeWidth="2" opacity=".8" />
          <path d="M0 120C20 104 36 86 60 58" stroke="#e6ffff" opacity=".4" />
        </Streaks>
        <IconColumn>
          {shortcuts.map((s) => (
            <Shortcut key={s.name}>
              {s.icon}
              {s.name}
              {s.linked && (
                <Overlay>
                  <ShortcutArrow />
                </Overlay>
              )}
            </Shortcut>
          ))}
        </IconColumn>
        <Browser />
        <BackWindow />
        <Explorer />
        <Pointer width="14" height="21" viewBox="0 0 14 21">
          <path d="M1 1v15.500l3.600-3.400 2.600 6 2.500-1.100-2.600-5.900H12z" fill="#fff" stroke="#16181c" strokeWidth="1.100" />
        </Pointer>
      </Desktop>
      <TaskbarArea />
    </Screen>
  );
}
